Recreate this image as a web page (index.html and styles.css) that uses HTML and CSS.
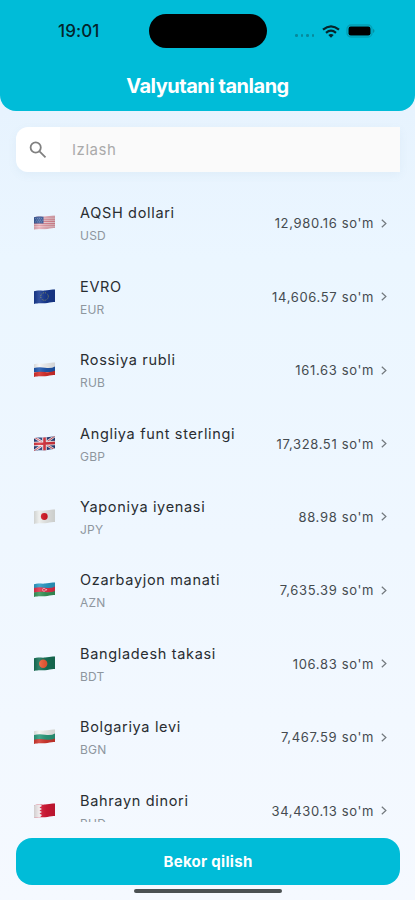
FILE: index.html
```html
<!DOCTYPE html>
<html lang="uz">
<head>
<meta charset="utf-8">
<meta name="viewport" content="width=device-width">
<title>Valyutani tanlang</title>
<link rel="stylesheet" href="styles.css">
</head>
<body>
<svg class="defs" aria-hidden="true">
  <defs>
    <clipPath id="wave"><path d="M0 2.2C4 .8 7 2 11 1.6S17 .1 21 .6V13C17 12.600 15 14 11 14.200S4 13.800 0 14.900Z"/></clipPath>
    <linearGradient id="fold"><stop offset="0" stop-color="#000" stop-opacity=".12"/><stop offset=".25" stop-color="#fff" stop-opacity=".12"/><stop offset=".6" stop-color="#000" stop-opacity=".08"/><stop offset="1" stop-color="#000" stop-opacity=".14"/></linearGradient>
  </defs>
</svg>
<div class="screen">
  <header class="header">
    <div class="status">
      <span class="time">19:01</span>
      <span class="island"></span>
      <span class="signals">
        <span class="dots"><i></i><i></i><i></i><i></i></span>
        <svg class="wifi" viewBox="0 0 18 13"><g fill="none" stroke="#06252b" stroke-width="2.200"><path d="M1 4.700Q9-2 17 4.700"/><path d="M4 7.800Q9 3.500 14 7.800"/></g><path fill="#06252b" d="M6.300 9.900Q9 8 11.700 9.900L9 12.700Z"/></svg>
        <svg class="battery" viewBox="0 0 30 14"><rect x="1" y="1" width="25" height="12" rx="4" fill="none" stroke="#07879890" stroke-width="1.300"/><rect x="2.500" y="2.500" width="22" height="9" rx="2.200" fill="#000"/><path d="M27.300 4.800Q29.500 7 27.300 9.200Z" fill="#087f8e"/></svg>
      </span>
    </div>
    <h1 class="title">Valyutani tanlang</h1>
  </header>

  <div class="search">
    <span class="search-icon"><svg viewBox="0 0 18 18"><circle cx="6.700" cy="6.500" r="5.100"/><path d="M10.500 10.400L16.500 16.400"/></svg></span>
    <span class="search-field">Izlash</span>
  </div>

  <main class="list">
    <div class="row">
      <svg class="flag" viewBox="0 0 21 15"><g clip-path="url(#wave)"><path fill="#f3d3da" d="M0 0h21v15H0z"/><path stroke="#e08a97" stroke-width="1.100" d="M0 2h21M0 4.200h21M0 6.400h21M0 8.600h21M0 10.800h21M0 13h21"/><path fill="#3b5c9b" d="M0 0h9.500v8.500H0z"/><path stroke="#a9bbdc" stroke-width=".6" stroke-dasharray=".7 1.300" d="M1 3.500h8M2 5.200h7M1 6.900h8"/><path fill="url(#fold)" d="M0 0h21v15H0z"/></g></svg>
      <div class="names"><div class="name">AQSH dollari</div><div class="code">USD</div></div>
      <div class="rate">12,980.16 so'm</div><svg class="chevron" viewBox="0 0 6 9"><path d="M.8.700L4.900 4.500L.8 8.300"/></svg>
    </div>
    <div class="row">
      <svg class="flag" viewBox="0 0 21 15"><g clip-path="url(#wave)"><path fill="#183a92" d="M0 0h21v15H0z"/><circle cx="10.500" cy="7.500" r="3.800" fill="none" stroke="#8b925f" stroke-width="1" stroke-dasharray="1 1"/><path fill="url(#fold)" d="M0 0h21v15H0z"/></g></svg>
      <div class="names"><div class="name">EVRO</div><div class="code">EUR</div></div>
      <div class="rate">14,606.57 so'm</div><svg class="chevron" viewBox="0 0 6 9"><path d="M.8.700L4.900 4.500L.8 8.300"/></svg>
    </div>
    <div class="row">
      <svg class="flag" viewBox="0 0 21 15"><g clip-path="url(#wave)"><path fill="#f5f6f7" d="M0 0h21v6H0z"/><path fill="#2058af" d="M0 6Q5 4.500 11 5.700T21 4.500V10H0z"/><path fill="#d72e2b" d="M0 10.500Q5 9.300 11 10T21 8.700V15H0z"/><path fill="url(#fold)" d="M0 0h21v15H0z"/></g></svg>
      <div class="names"><div class="name">Rossiya rubli</div><div class="code">RUB</div></div>
      <div class="rate">161.63 so'm</div><svg class="chevron" viewBox="0 0 6 9"><path d="M.8.700L4.900 4.500L.8 8.300"/></svg>
    </div>
    <div class="row">
      <svg class="flag" viewBox="0 0 21 15"><g clip-path="url(#wave)"><path fill="#283f7b" d="M0 0h21v15H0z"/><path stroke="#ece7ee" stroke-width="2.600" d="M0 1L21 14M0 15L21 0"/><path stroke="#d84a56" stroke-width=".9" d="M0 1L21 14M0 15L21 0"/><path stroke="#f5edf0" stroke-width="4.600" d="M10.500 0V15M0 8L21 7"/><path stroke="#d93540" stroke-width="2.600" d="M10.500 0V15M0 8L21 7"/><path fill="url(#fold)" d="M0 0h21v15H0z"/></g></svg>
      <div class="names"><div class="name">Angliya funt sterlingi</div><div class="code">GBP</div></div>
      <div class="rate">17,328.51 so'm</div><svg class="chevron" viewBox="0 0 6 9"><path d="M.8.700L4.900 4.500L.8 8.300"/></svg>
    </div>
    <div class="row">
      <svg class="flag" viewBox="0 0 21 15"><g clip-path="url(#wave)"><path fill="#eceeec" d="M0 0h21v15H0z"/><circle cx="10.300" cy="7.500" r="3.400" fill="#d51925"/><path fill="url(#fold)" d="M0 0h21v15H0z"/></g></svg>
      <div class="names"><div class="name">Yaponiya iyenasi</div><div class="code">JPY</div></div>
      <div class="rate">88.98 so'm</div><svg class="chevron" viewBox="0 0 6 9"><path d="M.8.700L4.900 4.500L.8 8.300"/></svg>
    </div>
    <div class="row">
      <svg class="flag" viewBox="0 0 21 15"><g clip-path="url(#wave)"><path fill="#2b9dc7" d="M0 0h21v7H0z"/><path fill="#e52f4a" d="M0 6Q5 4.500 11 5.700T21 4.500V10.800H0z"/><path fill="#38955a" d="M0 10.500Q5 9.300 11 10T21 9V15H0z"/><circle cx="10" cy="7.800" r="1.500" fill="none" stroke="#f5bdc8" stroke-width=".8"/><circle cx="12.500" cy="7.700" r=".7" fill="#f6cbd1"/><path fill="url(#fold)" d="M0 0h21v15H0z"/></g></svg>
      <div class="names"><div class="name">Ozarbayjon manati</div><div class="code">AZN</div></div>
      <div class="rate">7,635.39 so'm</div><svg class="chevron" viewBox="0 0 6 9"><path d="M.8.700L4.900 4.500L.8 8.300"/></svg>
    </div>
    <div class="row">
      <svg class="flag" viewBox="0 0 21 15"><g clip-path="url(#wave)"><path fill="#177257" d="M0 0h21v15H0z"/><circle cx="9.200" cy="7.800" r="4.200" fill="#ed5934"/><path fill="url(#fold)" d="M0 0h21v15H0z"/></g></svg>
      <div class="names"><div class="name">Bangladesh takasi</div><div class="code">BDT</div></div>
      <div class="rate">106.83 so'm</div><svg class="chevron" viewBox="0 0 6 9"><path d="M.8.700L4.900 4.500L.8 8.300"/></svg>
    </div>
    <div class="row">
      <svg class="flag" viewBox="0 0 21 15"><g clip-path="url(#wave)"><path fill="#f4f5f2" d="M0 0h21v6H0z"/><path fill="#2b9b7c" d="M0 6Q5 4.500 11 5.700T21 4.500V11H0z"/><path fill="#d3382f" d="M0 10.700Q5 9.500 11 10.500T21 9.500V15H0z"/><path fill="url(#fold)" d="M0 0h21v15H0z"/></g></svg>
      <div class="names"><div class="name">Bolgariya levi</div><div class="code">BGN</div></div>
      <div class="rate">7,467.59 so'm</div><svg class="chevron" viewBox="0 0 6 9"><path d="M.8.700L4.900 4.500L.8 8.300"/></svg>
    </div>
    <div class="row">
      <svg class="flag" viewBox="0 0 21 15"><g clip-path="url(#wave)"><path fill="#d51936" d="M0 0h21v15H0z"/><path fill="#eee9eb" d="M0 0H5.500L8 3L5.500 4.500L8 6L5.500 7.500L8 9L5.500 10.500L8 12L5.500 15H0z"/><path fill="url(#fold)" d="M0 0h21v15H0z"/></g></svg>
      <div class="names"><div class="name">Bahrayn dinori</div><div class="code">BHD</div></div>
      <div class="rate">34,430.13 so'm</div><svg class="chevron" viewBox="0 0 6 9"><path d="M.8.700L4.900 4.500L.8 8.300"/></svg>
    </div>
  </main>

  <button class="cancel">Bekor qilish</button>
  <div class="home"></div>
</div>
</body>
</html>
```
FILE: styles.css
```css
* { box-sizing: border-box; }
body { margin: 0; font-family: Inter, "Noto Sans", sans-serif; }
.defs { position: absolute; width: 0; height: 0; }
.screen {
  width: 415px;
  height: 900px;
  overflow: hidden;
  display: flex;
  flex-direction: column;
  background: linear-gradient(#e7f3fe 110px, #ebf6ff 260px, #eff7ff 540px, #f5f9ff 900px);
}
.header {
  flex: none;
  height: 111px;
  border-radius: 0 0 16px 16px;
  background: #00bcd8;
}
.status {
  height: 62px;
  display: grid;
  grid-template-columns: 149px 118px 148px;
  align-items: center;
}
.time {
  padding-left: 58px;
  font-size: 17px;
  font-weight: 500;
  letter-spacing: 0.1px;
  color: #04252b;
}
.island { height: 34px; border-radius: 17px; background: #000; }
.signals { display: flex; align-items: center; padding-left: 27px; }
.dots { display: flex; gap: 3px; margin: 9px 8px 0 1px; }
.dots i { width: 2.5px; height: 2.5px; border-radius: 50%; background: #078a9c; }
.wifi { width: 18px; height: 13px; margin-right: 6px; }
.battery { width: 30px; height: 14px; }
.title {
  margin: 10px 0 0;
  text-align: center;
  font-size: 20px;
  line-height: 28px;
  font-weight: 700;
  letter-spacing: -0.48px;
  color: #fff;
}
.search {
  flex: none;
  display: flex;
  height: 45px;
  margin: 16px 15px 0 16px;
  border-radius: 12px 0 0 12px;
  box-shadow: 0 3px 10px #5d89a512;
}
.search-icon {
  width: 44px;
  display: flex;
  align-items: center;
  justify-content: center;
  border-radius: 12px 0 0 12px;
  background: #fff;
}
.search-icon svg { width: 18px; height: 18px; fill: none; stroke: #808080; stroke-width: 1.8; }
.search-field {
  flex: 1;
  padding-left: 12px;
  background: #fafafa;
  font-size: 15px;
  line-height: 46px;
  letter-spacing: 0.55px;
  color: #aaa;
}
.list { flex: none; height: 650px; overflow: hidden; padding-top: 14.5px; }
.row {
  height: 73.45px;
  padding: 0 28.5px 0 34px;
  display: flex;
  align-items: center;
}
.flag { width: 21px; height: 15px; margin: 0 25px 1px 0; }
.names { flex: 1; }
.name { font-size: 14.5px; line-height: 22px; letter-spacing: 0.67px; color: #292d31; margin-top: 1px; }
.code { font-size: 12px; line-height: 18px; margin-top: 3px; letter-spacing: 0.2px; color: #8e969e; }
.rate { font-size: 13px; letter-spacing: 0.65px; color: #454b50; }
.chevron { width: 6px; height: 9px; margin-left: 6.5px; fill: none; stroke: #73797e; stroke-width: 1.2; }
.cancel {
  flex: none;
  height: 47px;
  margin: 16px 15px 0 16px;
  padding: 0;
  border: 0;
  border-radius: 16px;
  background: #00bcd8;
  font: 700 15px/47px Inter, sans-serif;
  letter-spacing: 0.3px;
  color: #fff;
}
.home { flex: none; width: 148px; height: 4px; margin: 4px auto 0 134px; border-radius: 2px; background: #4b5153; }
```
